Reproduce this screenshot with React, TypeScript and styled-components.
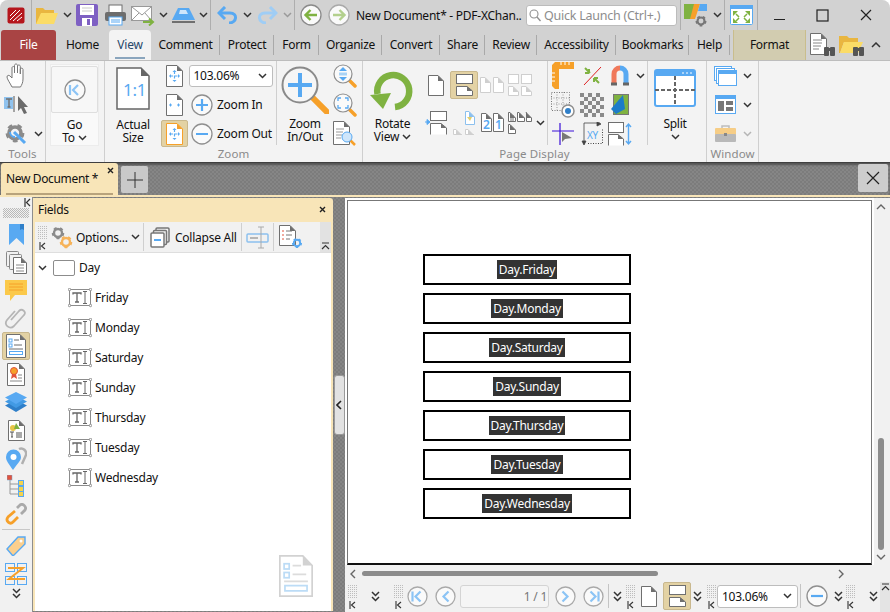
import React from 'react';
import styled, { createGlobalStyle } from 'styled-components';

const Global = createGlobalStyle`
  html, body { margin: 0; padding: 0; background: #fff; }
  body { font-family: 'Noto Sans', 'Open Sans', sans-serif; font-size: 12px; letter-spacing: -0.25px; color: #111; }
`;

const texture = `repeating-conic-gradient(#7c7c7c 0 25%, #868686 0 50%) 0 0 / 4px 4px`;

const Win = styled.div`
  width: 890px;
  height: 612px;
  display: flex;
  flex-direction: column;
  overflow: hidden;
  background: #f1f1f1;
  border-radius: 8px 8px 0 0;
`;

const TitleBar = styled.div`
  height: 30px;
  flex: none;
  display: flex;
  align-items: center;
  background: #d2d2d2;
`;

const Slot = styled.div<{ $w: number }>`
  width: ${p => p.$w}px;
  flex: none;
  display: flex;
  align-items: center;
  justify-content: center;
`;

const VLine = styled.div`
  width: 1px;
  height: 30px;
  flex: none;
  background: #aeaeae;
`;

const DocTitle = styled.div`
  width: 170px;
  margin-left: 5px;
  flex: none;
  white-space: nowrap;
`;

const Search = styled.div`
  width: 151px;
  height: 21px;
  box-sizing: border-box;
  flex: none;
  display: flex;
  align-items: center;
  gap: 3px;
  padding-left: 2px;
  background: #fff;
  border: 1px solid #bcbcbc;
  border-radius: 3px;
  color: #8d8d8d;
  font-size: 12.5px;
`;

const TabStrip = styled.div`
  height: 30px;
  flex: none;
  display: flex;
  align-items: stretch;
  background: #d2d2d2;
  padding-left: 1px;
`;

const FileTab = styled.div`
  width: 55px;
  flex: none;
  box-sizing: border-box;
  padding-bottom: 2px;
  display: flex;
  align-items: center;
  justify-content: center;
  background: #a94444;
  color: #fff;
  border-radius: 3px 3px 0 0;
`;

const Tab = styled.div<{ $w: number; $active?: boolean; $sep?: boolean }>`
  width: ${p => p.$w}px;
  flex: none;
  box-sizing: border-box;
  padding-bottom: 2px;
  position: relative;
  display: flex;
  align-items: center;
  justify-content: center;
  background: ${p => (p.$active ? '#f3f3f3' : 'transparent')};
  border-radius: ${p => (p.$active ? '4px 4px 0 0' : '0')};
  color: ${p => (p.$active ? '#28486a' : '#111')};
  &::after {
    content: '';
    position: absolute;
    right: 0;
    top: 5px;
    bottom: 5px;
    width: 1px;
    background: ${p => (p.$sep ? '#a9a9a9' : 'transparent')};
  }
  &::before {
    content: '';
    position: absolute;
    left: 6px;
    right: 6px;
    bottom: 1px;
    height: 2px;
    background: ${p => (p.$active ? '#8aa5bd' : 'transparent')};
  }
`;

const FormatTab = styled.div`
  width: 73px;
  margin-left: 3px;
  flex: none;
  padding-bottom: 2px;
  display: flex;
  align-items: center;
  justify-content: center;
  background: #d2ccb0;
  border-left: 1px solid #c9bd8c;
  border-right: 1px solid #c9bd8c;
  box-sizing: border-box;
`;

const Ribbon = styled.div`
  height: 103px;
  flex: none;
  box-sizing: border-box;
  display: flex;
  background: #f3f3f3;
  border-top: 1px solid #bdbdbd;
  border-bottom: 1px solid #3f3f3f;
`;

const Group = styled.div<{ $w: number }>`
  width: ${p => p.$w}px;
  flex: none;
  box-sizing: border-box;
  display: flex;
  flex-direction: column;
  border-right: 1px solid #cfcfcf;
`;

const GroupBody = styled.div`
  height: 85px;
  flex: none;
  display: flex;
`;

const GroupLabel = styled.div`
  flex: 1;
  padding-bottom: 2px;
  display: flex;
  align-items: center;
  justify-content: center;
  color: #8a8a8a;
  font-size: 11.5px;
  letter-spacing: 0.1px;
`;

const Cells = styled.div<{ $cols: string; $rows: string }>`
  display: grid;
  grid-template-columns: ${p => p.$cols};
  grid-template-rows: ${p => p.$rows};
  flex: none;
  justify-items: center;
  align-items: center;
`;

const Big = styled.div<{ $w: number; $pad?: number }>`
  width: ${p => p.$w}px;
  flex: none;
  display: flex;
  flex-direction: column;
  align-items: center;
  padding-top: ${p => p.$pad ?? 6}px;
`;

const BigText = styled.div<{ $top: number }>`
  margin-top: ${p => p.$top}px;
  display: flex;
  flex-direction: column;
  align-items: center;
  white-space: nowrap;
`;

const BigLine = styled.div`
  height: 13px;
  line-height: 13px;
  display: flex;
  align-items: center;
  gap: 3px;
`;

const GoCard = styled.div`
  width: 49px;
  height: 82px;
  margin: 3px 0 0 4px;
  box-sizing: border-box;
  padding: 1px 0;
  background: #f9f9f9;
  border: 1px solid #ececec;
  display: flex;
  flex-direction: column;
  align-items: center;
`;

const GoFace = styled.div`
  width: 47px;
  height: 47px;
  flex: none;
  box-sizing: border-box;
  background: #f7f7f7;
  border: 1px solid #dedede;
  border-radius: 2px;
  display: flex;
  align-items: center;
  justify-content: center;
`;

const Toggled = styled.div<{ $w: number; $h: number }>`
  width: ${p => p.$w}px;
  height: ${p => p.$h}px;
  box-sizing: border-box;
  flex: none;
  display: flex;
  align-items: center;
  justify-content: center;
  background: #e3d2a4;
  border: 1px solid #c9b88e;
  border-radius: 2px;
`;

const Combo = styled.div<{ $w: number; $h: number }>`
  width: ${p => p.$w}px;
  height: ${p => p.$h}px;
  box-sizing: border-box;
  flex: none;
  display: flex;
  align-items: center;
  justify-content: space-between;
  padding: 0 5px 0 4px;
  background: #fff;
  border: 1px solid #bdbdbd;
  border-radius: 3px;
`;

const ZoomRow = styled.div`
  display: flex;
  align-items: center;
  gap: 4px;
  justify-self: start;
  margin-left: 4px;
  white-space: nowrap;
`;

const ShortLine = styled.div`
  width: 1px;
  height: 84px;
  flex: none;
  background: #cfcfcf;
`;

const DocTabs = styled.div`
  height: 34px;
  flex: none;
  box-sizing: border-box;
  display: flex;
  background: ${texture};
  box-shadow: inset 0 2px 2px #555;
  border-bottom: 2px solid #f8e5b8;
  padding-left: 1px;
`;

const DocTab = styled.div`
  width: 117px;
  flex: none;
  position: relative;
  box-sizing: border-box;
  padding: 7px 0 0 5px;
  line-height: 17px;
  background: #f8e5b8;
  border-radius: 3px 3px 0 0;
  letter-spacing: -0.35px;
  white-space: nowrap;
  &::after {
    content: '';
    position: absolute;
    left: 5px;
    right: 5px;
    bottom: 0;
    height: 2px;
    background: #b8a37c;
  }
`;

const DocTabClose = styled.div`
  position: absolute;
  top: 4px;
  right: 4px;
`;

const AddTab = styled.div`
  width: 27px;
  height: 27px;
  margin: 3px 0 0 3px;
  flex: none;
  display: flex;
  align-items: center;
  justify-content: center;
  background: #c9c9c9;
  border-radius: 2px;
`;

const CloseDoc = styled.div`
  width: 30px;
  height: 28px;
  margin: 1px 2px 0 auto;
  flex: none;
  display: flex;
  align-items: center;
  justify-content: center;
  background: #cdcdcd;
  border-radius: 2px;
`;

const Main = styled.div`
  flex: 1;
  min-height: 0;
  display: flex;
  background: ${texture};
`;

const Rail = styled.div`
  width: 33px;
  flex: none;
  box-sizing: border-box;
  display: flex;
  flex-direction: column;
  align-items: center;
  background: #f1f1f1;
  border-right: 1px solid #8e8e8e;
`;

const RailTop = styled.div`
  align-self: flex-end;
  height: 11px;
  padding: 1px 1px 0 0;
  box-sizing: border-box;
`;

const Dots = styled.div`
  width: 26px;
  height: 10px;
  margin-bottom: 2px;
  flex: none;
  background: repeating-conic-gradient(#b9b9b9 0 25%, transparent 0 50%) 0 0 / 2px 2px;
`;

const RailItem = styled.div<{ $active?: boolean }>`
  width: 28px;
  height: 28px;
  box-sizing: border-box;
  flex: none;
  display: flex;
  align-items: center;
  justify-content: center;
  background: ${p => (p.$active ? '#e3d2a4' : 'transparent')};
  border: 1px solid ${p => (p.$active ? '#c9b88e' : 'transparent')};
  border-radius: 2px;
`;

const RailRule = styled.div`
  width: 28px;
  height: 1px;
  margin: 1px 0 2px;
  flex: none;
  background: #c8c8c8;
`;

const Panel = styled.div`
  width: 300px;
  flex: none;
  margin: 1px 0;
  position: relative;
  box-sizing: border-box;
  display: flex;
  flex-direction: column;
  background: #f8e5b8;
  border-radius: 0 3px 0 0;
  padding: 0 2px;
`;

const PanelHead = styled.div`
  height: 24px;
  flex: none;
  padding-bottom: 1px;
  box-sizing: border-box;
  display: flex;
  align-items: center;
  justify-content: space-between;
  padding-left: 3px;
  padding-right: 5px;
`;

const PanelBar = styled.div`
  height: 31px;
  flex: none;
  box-sizing: border-box;
  display: flex;
  align-items: center;
  padding-left: 2px;
  background: #f1f1f1;
  border-bottom: 1px solid #dedede;
`;

const BarEnd = styled.div`
  width: 11px;
  height: 100%;
  margin-left: auto;
  flex: none;
  display: flex;
  align-items: flex-end;
  justify-content: center;
  padding-bottom: 2px;
  box-sizing: border-box;
  background: #e2e2e2;
`;

const BarLine = styled.div`
  width: 1px;
  height: 28px;
  flex: none;
  background: #cfcfcf;
`;

const BarText = styled.div<{ $w: number }>`
  width: ${p => p.$w}px;
  flex: none;
  white-space: nowrap;
`;

const Tree = styled.div`
  flex: 1;
  background: #fff;
`;

const TreeRow = styled.div<{ $child?: boolean }>`
  height: 30px;
  box-sizing: border-box;
  padding-bottom: 1px;
  display: flex;
  align-items: center;
  gap: 3px;
  padding-left: ${p => (p.$child ? 33 : 3)}px;
`;

const RootBox = styled.div`
  width: 22px;
  height: 16px;
  margin: 0 1px 0 3px;
  box-sizing: border-box;
  background: #fff;
  border: 1px solid #8c8c8c;
  border-radius: 2px;
`;

const Watermark = styled.div`
  position: absolute;
  right: 20px;
  bottom: 14px;
`;

const Splitter = styled.div`
  width: 12px;
  flex: none;
  display: flex;
  align-items: center;
  justify-content: center;
`;

const SplitGrip = styled.div`
  width: 9px;
  height: 58px;
  flex: none;
  display: flex;
  align-items: center;
  justify-content: center;
  background: #e2e2e2;
  border: 1px solid #9a9a9a;
  border-radius: 3px;
`;

const Viewer = styled.div`
  flex: 1;
  min-width: 0;
  display: flex;
  flex-direction: column;
  padding-top: 1px;
`;

const ViewRow = styled.div`
  height: 367px;
  flex: none;
  display: flex;
`;

const Sheet = styled.div`
  width: 529px;
  flex: none;
  box-sizing: border-box;
  border: 2px solid #fff;
  border-bottom: 0;
  background: #fff;
`;

const SheetInner = styled.div`
  height: 100%;
  box-sizing: border-box;
  padding: 53px 0 0 75px;
  display: flex;
  flex-direction: column;
  gap: 8px;
  background: #fff;
  border: 1px solid #777;
  border-bottom: 2px solid #111;
`;

const FieldBox = styled.div`
  width: 208px;
  height: 31px;
  flex: none;
  box-sizing: border-box;
  display: flex;
  align-items: center;
  justify-content: center;
  background: #fff;
  border: 2px solid #000;
`;

const FieldName = styled.span`
  padding: 0 2px;
  line-height: 19px;
  background: #333;
  color: #fff;
`;

const VScroll = styled.div`
  flex: 1;
  display: flex;
  flex-direction: column;
  align-items: center;
  padding: 6px 2px 5px 0;
  box-sizing: border-box;
  background: #f1f1f1;
`;

const VThumb = styled.div`
  width: 6px;
  height: 112px;
  margin-top: auto;
  margin-bottom: 4px;
  flex: none;
  background: #8c8c8c;
  border-radius: 3px;
`;

const HScroll = styled.div`
  height: 17px;
  flex: none;
  display: flex;
  align-items: center;
  padding-left: 5px;
  background: #f1f1f1;
`;

const HThumb = styled.div`
  width: 296px;
  height: 5px;
  margin: 0 180px 0 6px;
  flex: none;
  background: #8c8c8c;
  border-radius: 3px;
`;

const Status = styled.div`
  flex: 1;
  display: flex;
  align-items: center;
  padding: 0 0 2px 2px;
  background: #f1f1f1;
  border-radius: 0 0 8px 0;
`;

const StatusEnd = styled.div`
  width: 10px;
  flex: none;
  align-self: stretch;
  margin-bottom: -2px;
  padding-top: 1px;
  box-sizing: border-box;
  display: flex;
  justify-content: center;
  background: #e4e4e4;
`;

const PageInput = styled.div`
  width: 89px;
  height: 23px;
  margin-left: 1px;
  flex: none;
  box-sizing: border-box;
  display: flex;
  align-items: center;
  justify-content: flex-end;
  gap: 2px;
  padding-right: 1px;
  background: #f5f5f5;
  border: 1px solid #d4d4d4;
  border-radius: 3px;
  color: #777;
`;

const StatusLine = styled.div`
  width: 1px;
  height: 24px;
  flex: none;
  background: #c4c4c4;
`;

const Glyph = styled.svg`
  display: block;
  flex: none;
`;

type IconProps = { w: number; h: number; children?: React.ReactNode };
const Ico = ({ w, h, children }: IconProps) => (
  <Glyph width={w} height={h} viewBox={`0 0 ${w} ${h}`} fill="none">
    {children}
  </Glyph>
);

const BLUE = '#58a9f2';
const ORANGE = '#f6a029';
const GRAY = '#6f6f6f';
const GREEN = '#7fb241';
const FONT = "'Noto Sans', sans-serif";

const Chev = ({ c = '#333' }: { c?: string }) => (
  <Ico w={9} h={6}>
    <path d="M1 1l3.5 3.5L8 1" stroke={c} strokeWidth="1.5" />
  </Ico>
);

const DblChev = () => (
  <Ico w={9} h={11}>
    <path d="M1 1l3.5 3.5L8 1M1 6l3.5 3.5L8 6" stroke="#333" strokeWidth="1.5" />
  </Ico>
);

const Collapse = () => (
  <Ico w={7} h={9}>
    <path d="M1 0v9M6 1L2.5 4.5 6 8" stroke="#333" strokeWidth="1.2" />
  </Ico>
);

const GripMark = () => (
  <Ico w={10} h={28}>
    {[1, 3, 5, 7, 9].map(x =>
      [3, 5, 7, 9, 11, 13, 15].map(y => <rect key={`${x}-${y}`} x={x} y={y} width="1" height="1" fill="#bdbdbd" />),
    )}
    <path d="M3 19v8M8 20l-3.5 3 3.5 3" stroke="#333" strokeWidth="1.1" />
  </Ico>
);

const Cross = ({ s = 8, c = '#222', sw = 1.5 }: { s?: number; c?: string; sw?: number }) => (
  <Ico w={s} h={s}>
    <path d={`M1 1L${s - 1} ${s - 1}M${s - 1} 1L1 ${s - 1}`} stroke={c} strokeWidth={sw} />
  </Ico>
);

const Sh = ({ x = 0, y = 0, w, h, c = GRAY, f = '#fff' }: { x?: number; y?: number; w: number; h: number; c?: string; f?: string }) => (
  <>
    <path d={`M${x + 0.5} ${y + 0.5}H${x + w - 6}L${x + w - 0.5} ${y + 6}V${y + h - 0.5}H${x + 0.5}Z`} fill={f} stroke={c} />
    <path d={`M${x + w - 6} ${y + 0.5}L${x + w - 0.5} ${y + 6}H${x + w - 6}Z`} fill={c} />
  </>
);

const Gear = ({ cx, cy, r, c }: { cx: number; cy: number; r: number; c: string }) => (
  <>
    <circle cx={cx} cy={cy} r={r} stroke={c} strokeWidth={r * 0.6} />
    <circle cx={cx} cy={cy} r={r * 1.32} stroke={c} strokeWidth={r * 0.5} strokeDasharray={`${r * 0.75} ${r * 0.9}`} />
  </>
);

const Round = ({ s, c = '#8f8f8f', children }: { s: number; c?: string; children?: React.ReactNode }) => (
  <Ico w={s} h={s}>
    <circle cx={s / 2} cy={s / 2} r={s / 2 - 1} fill="#fafafa" stroke={c} strokeWidth="1.3" />
    {children}
  </Ico>
);

const AppLogo = () => (
  <Ico w={18} h={17}>
    <rect x="0.5" y="0.5" width="17" height="16" rx="2" fill="#b5161c" />
    <path d="M3 13L13 3M6 14l9-8M3 9l6-6M10 14l5-4" stroke="#fff" strokeWidth="1" />
  </Ico>
);

const Folder = () => (
  <Ico w={24} h={19}>
    <path d="M1 18V2h7l2 2h9v4H6L2 18z" fill="#e9b640" />
    <path d="M1 18L6 7h17l-4 11z" fill="#fbdc67" />
  </Ico>
);

const Save = () => (
  <Ico w={22} h={22}>
    <rect width="22" height="22" rx="2" fill="#7e60c3" />
    <rect x="4" y="1" width="14" height="10" fill="#fff" />
    <path d="M6 4h10M6 7h10" stroke="#c9c9c9" />
    <rect x="6" y="14" width="10" height="8" fill="#fff" />
    <rect x="11" y="15" width="3" height="6" fill="#7e60c3" />
  </Ico>
);

const Printer = () => (
  <Ico w={23} h={22}>
    <rect x="5" y="1" width="13" height="8" fill="#fff" stroke={GRAY} />
    <rect x="1" y="8" width="21" height="9" rx="2" fill="#6d6d6d" />
    <rect x="5" y="13" width="13" height="8" fill="#fff" stroke={BLUE} />
    <path d="M7 16h9M7 18h9" stroke={BLUE} />
  </Ico>
);

const Mail = () => (
  <Ico w={24} h={21}>
    <rect x="0.5" y="1.5" width="20" height="14" fill="#fff" stroke="#999" />
    <path d="M1 2l10 8 9-8M1 15l7-7M20 15l-6-7" stroke="#999" />
    <path d="M12 17h9M18 13.5l4 3.5-4 3.5" stroke={GREEN} strokeWidth="2" />
  </Ico>
);

const Stamp = () => (
  <Ico w={25} h={17}>
    <path d="M7 1h11l6 12H1z" fill={BLUE} />
    <path d="M9 3h6l2 4H8z" fill="#cfe6fb" />
    <rect x="1" y="14" width="23" height="2" fill="#6f6f6f" />
  </Ico>
);

const Undo = ({ c, flip }: { c: string; flip?: boolean }) => (
  <Ico w={21} h={18}>
    <g transform={flip ? 'translate(21 0) scale(-1 1)' : undefined}>
      <path d="M3 7h10c8 0 7 10-1 10" stroke={c} strokeWidth="3" />
      <path d="M8 1L2 7l6 6" stroke={c} strokeWidth="3" />
    </g>
  </Ico>
);

const NavArrow = ({ c, ring, flip }: { c: string; ring: string; flip?: boolean }) => (
  <Round s={22} c={ring}>
    <g transform={flip ? 'translate(22 0) scale(-1 1)' : undefined}>
      <path d="M17 11H6M10.5 6L5.5 11l5 5" stroke={c} strokeWidth="2.4" />
    </g>
  </Round>
);

const SearchGlass = () => (
  <Ico w={12} h={13}>
    <circle cx="5" cy="5" r="4" stroke="#8f8f8f" strokeWidth="1.1" />
    <path d="M8 8l3.5 4" stroke="#8f8f8f" strokeWidth="1.3" />
  </Ico>
);

const ColorTool = () => (
  <Ico w={24} h={25}>
    <rect x="0" y="1" width="10" height="15" fill={GREEN} />
    <path d="M10 1h6l-5 15H6z" fill={ORANGE} />
    <path d="M16 1h7v7h-9z" fill={BLUE} />
    <Gear cx={17} cy={18} r={3.5} c="#777" />
  </Ico>
);

const Fullscreen = () => (
  <Ico w={23} h={20}>
    <rect x="0.5" y="0.5" width="22" height="19" rx="1" fill="#fff" stroke={BLUE} />
    <rect x="0" y="0" width="23" height="4" fill={BLUE} />
    <path d="M3 6h5L3 11zM20 6h-5l5 5zM3 18h5l-5-5zM20 18h-5l5-5z" fill={GREEN} />
    <path d="M6 9l3 3M17 9l-3 3M6 16l3-3M17 16l-3-3" stroke={GREEN} strokeWidth="1.5" />
  </Ico>
);

const Hand = () => (
  <Ico w={20} h={25}>
    <path d="M6 24C4 20 1 16 1 14c0-2 2-2 3-1l2 2V5c0-2 2.5-2 2.5 0v5V2.5c0-2 3-2 3 0V10V3.5c0-2 2.8-2 2.8 0V11V6.5c0-1.8 2.7-1.8 2.7 0V16c0 4-1.5 6-2.5 8z" fill="#fff" stroke="#777" />
  </Ico>
);

const TextSelect = () => (
  <Ico w={25} h={20}>
    <rect x="0" y="2" width="9" height="12" fill="#8fc2ee" />
    <path d="M2 4h6M5 4v8M3.5 12h3" stroke={GRAY} strokeWidth="1.4" />
    <path d="M10 1v16" stroke="#555" />
    <path d="M14 1v15l3-3 3 6 3-1-3-6h4z" fill="#6a6a6a" />
  </Ico>
);

const GearWrench = () => (
  <Ico w={22} h={22}>
    <Gear cx={10} cy={10} r={6} c="#8b8b8b" />
    <path d="M9 9l11 11" stroke={BLUE} strokeWidth="3" />
    <path d="M5 9a5 5 0 0 0 5 5" stroke={BLUE} strokeWidth="2" />
  </Ico>
);

// first/prev/next/last page buttons share the same ring and chevrons
const PageBtn = ({ s = 21, kind, c = '#a9a9a9' }: { s?: number; kind: 'first' | 'prev' | 'next' | 'last'; c?: string }) => {
  const m = s / 2;
  const left = `M${m + 3} ${m - 5}L${m - 2} ${m}l5 5`;
  const right = `M${m - 3} ${m - 5}L${m + 2} ${m}l-5 5`;
  const d = {
    first: `${left}M${m - 5} ${m - 5}v10`,
    prev: left,
    next: right,
    last: `${right}M${m + 5} ${m - 5}v10`,
  }[kind];
  return (
    <Round s={s} c={c}>
      <path d={d} stroke="#8cc4f5" strokeWidth="2.2" />
    </Round>
  );
};

const ActualSize = () => (
  <Ico w={34} h={43}>
    <path d="M1 1H25L33 9V42H1Z" fill="#fff" stroke="#666" strokeWidth="1.5" />
    <path d="M25 1L33 9H25Z" fill="#666" />
    <text x="7" y="29" fontSize="17" fill={BLUE} fontFamily={FONT}>1:1</text>
  </Ico>
);

const FitDoc = ({ kind, edge = GRAY }: { kind: 'all' | 'width'; edge?: string }) => (
  <Ico w={17} h={22}>
    <Sh w={17} h={22} c={edge} />
    {kind === 'all' && <path d="M8.5 6v10M4 11h9" stroke={BLUE} strokeDasharray="3 1.5" strokeWidth="1.2" />}
    <path d="M3 11l2-2v4zM14 11l-2-2v4z" fill={BLUE} />
    {kind === 'all' && <path d="M8.5 5l-2 2h4zM8.5 17l-2-2h4z" fill={BLUE} />}
    {kind === 'width' && <path d="M5 11h1M11 11h1" stroke={BLUE} />}
  </Ico>
);

const PlusCircle = ({ s = 22, minus }: { s?: number; minus?: boolean }) => (
  <Round s={s}>
    <path d={minus ? `M5 ${s / 2}H${s - 5}` : `M5 ${s / 2}H${s - 5}M${s / 2} 5V${s - 5}`} stroke={BLUE} strokeWidth="2.2" />
  </Round>
);

const BigMagnifier = () => (
  <Ico w={48} h={48}>
    <path d="M31 31l15 15" stroke={ORANGE} strokeWidth="6" strokeLinecap="round" />
    <circle cx="19" cy="19" r="17.5" fill="#f6f6f6" stroke="#8a8a8a" strokeWidth="2" />
    <path d="M7 19H31M19 7V31" stroke={BLUE} strokeWidth="4" />
  </Ico>
);

const SmallMagnifier = ({ children }: { children: React.ReactNode }) => (
  <Ico w={24} h={24}>
    <path d="M15 15l7 7" stroke={ORANGE} strokeWidth="3.5" strokeLinecap="round" />
    <circle cx="10" cy="10" r="9" fill="#fafafa" stroke="#8f8f8f" strokeWidth="1.2" />
    {children}
  </Ico>
);

const FindDoc = () => (
  <Ico w={24} h={26}>
    <Sh w={17} h={24} />
    <path d="M3 8h8M3 11h7M3 14h6M3 17h5" stroke="#999" />
    <path d="M17 19l5 5" stroke={ORANGE} strokeWidth="2.5" />
    <circle cx="14" cy="16" r="5" fill="#cfe6fb" stroke={BLUE} />
  </Ico>
);

const Rotate = () => (
  <Ico w={46} h={44}>
    <path d="M7.500 24A16 16 0 1 1 25 37" stroke={GREEN} strokeWidth="6.500" />
    <path d="M0 25l21-2-8 16z" fill={GREEN} />
  </Ico>
);

const SinglePage = () => (
  <Ico w={16} h={21}>
    <Sh w={16} h={21} />
  </Ico>
);

const SplitDoc = ({ c = GRAY }: { c?: string }) => (
  <Ico w={17} h={22}>
    <rect x="0.5" y="0.5" width="16" height="9" fill="#fff" stroke={c} />
    <path d="M0.5 21.5V12.5H11L16.5 17V21.5H0.5Z" fill="#fff" stroke={c} />
    <path d="M11 12.5l5.5 4.5H11z" fill={c} />
  </Ico>
);

const FaintPair = () => (
  <Ico w={24} h={18}>
    <Sh x={0} y={1} w={11} h={16} c="#cfcfcf" />
    <Sh x={13} y={1} w={11} h={16} c="#cfcfcf" />
  </Ico>
);

const FaintGrid = () => (
  <Ico w={25} h={22}>
    <rect x="0.5" y="0.5" width="10" height="9" fill="#fff" stroke="#cfcfcf" />
    <rect x="13.5" y="0.5" width="10" height="9" fill="#fff" stroke="#cfcfcf" />
    <Sh x={0} y={12} w={11} h={10} c="#cfcfcf" />
    <Sh x={13} y={12} w={11} h={10} c="#cfcfcf" />
  </Ico>
);

const ScrollDoc = () => (
  <Ico w={22} h={24}>
    <rect x="5.5" y="0.5" width="16" height="9" fill="#fff" stroke={GRAY} />
    <path d="M5.5 23.5V12.5H16L21.5 17V23.5" fill="#fff" stroke={GRAY} />
    <path d="M16 12.5l5.5 4.5H16z" fill={GRAY} />
    <path d="M0 11h3M2 8.5L5 11 2 13.5z" stroke={BLUE} fill={BLUE} />
  </Ico>
);

const CoverDoc = () => (
  <Ico w={22} h={24}>
    <Sh x={12} y={0} w={10} h={14} c="#8cc0ee" />
    <path d="M14 6h5l-2 4z" fill="#e3cf6a" />
    <Sh x={0} y={18} w={9} h={6} c="#cfcfcf" />
    <Sh x={12} y={18} w={9} h={6} c="#cfcfcf" />
  </Ico>
);

const NumDocs = () => (
  <Ico w={23} h={19}>
    <Sh x={0} y={0} w={11} h={19} />
    <text x="2" y="16" fontSize="12" fontWeight="600" fill={BLUE} fontFamily={FONT}>2</text>
    <Sh x={12} y={0} w={11} h={19} />
    <text x="14" y="16" fontSize="12" fontWeight="600" fill={BLUE} fontFamily={FONT}>1</text>
  </Ico>
);

const MiniDocs = () => (
  <Ico w={24} h={22}>
    <Sh x={0} y={0} w={8} h={10} />
    <path d="M2 4h4M2 6h4M2 8h4" stroke="#777" />
    <Sh x={9} y={0} w={8} h={10} />
    <Sh x={18} y={0} w={6} h={10} />
    <Sh x={0} y={12} w={8} h={10} />
  </Ico>
);

const Ruler = () => (
  <Ico w={22} h={27}>
    <path d="M0 3l3-3h19v7H7v20H3l-3-3z" fill={ORANGE} />
    <path d="M9 0v3M13 0v3M17 0v3M0 11h3M0 15h3M0 19h3" stroke="#fff" />
  </Ico>
);

const MeasureLine = () => (
  <Ico w={20} h={20}>
    <path d="M2 19L19 1" stroke="#e02020" />
    <path d="M3 2l5 5M7 7V3M7 7H3M17 17l-5-5M12 12v4M12 12h4" stroke={GREEN} strokeWidth="2" />
  </Ico>
);

const Magnet = () => (
  <Ico w={18} h={22}>
    <path d="M3 20V9a6 6 0 0 1 6-6" stroke="#f0785a" strokeWidth="5" />
    <path d="M15 20V9a6 6 0 0 0-6-6" stroke={BLUE} strokeWidth="5" />
    <path d="M0 19h6M12 19h6" stroke="#666" strokeWidth="3" />
  </Ico>
);

const Snap = () => (
  <Ico w={24} h={26}>
    <rect x="0.5" y="0.5" width="18" height="18" stroke="#777" strokeDasharray="1 1.5" />
    <path d="M6 0v19M12 0v19M0 6h19M0 12h19" stroke="#999" strokeDasharray="1 1.5" />
    <circle cx="17" cy="19" r="6" fill="#fff" stroke="#8f8f8f" strokeWidth="1.5" />
    <circle cx="17" cy="19" r="3" fill="#2f7fc9" />
  </Ico>
);

const Checker = () => (
  <Ico w={24} h={24}>
    {Array.from({ length: 36 }).map((_, i) => (
      <rect key={i} x={(i % 6) * 4} y={Math.floor(i / 6) * 4} width="4" height="4" fill={(i + Math.floor(i / 6)) % 2 ? '#f3f3f3' : '#8a8a8a'} />
    ))}
  </Ico>
);

const Swatch = () => (
  <Ico w={18} h={22}>
    <rect x="2.5" y="0.5" width="15" height="20" fill={GREEN} stroke="#777" />
    <path d="M0 15L12 1l2 14-9 5z" fill="#1c7cc9" />
  </Ico>
);

const CrossCursor = () => (
  <Ico w={22} h={22}>
    <path d="M8 0v22M0 8h22" stroke="#3a10d8" strokeWidth="1.2" />
    <path d="M10 9v10l3-3 7-1z" fill="#777" />
  </Ico>
);

const XY = () => (
  <Ico w={22} h={24}>
    <path d="M3 1h16M16 0l4 2-4 2zM3 1v21M1 19l2 4 2-4z" fill="#444" stroke="#444" strokeWidth="0.8" />
    <path d="M7 21.5h14.5V6" stroke="#444" strokeDasharray="1 1.5" />
    <text x="6" y="17" fontSize="10" fill={BLUE} fontFamily={FONT}>XY</text>
  </Ico>
);

const PageHeight = () => (
  <Ico w={24} h={24}>
    <rect x="0.5" y="0.5" width="15" height="10" fill="#fff" stroke={GRAY} />
    <path d="M0.5 23.5V12.5H10L15.5 17V23.5" fill="#fff" stroke={GRAY} />
    <path d="M10 12.5l5.5 4.5H10z" fill={GRAY} />
    <path d="M20.5 2v20M18 5l2.5-3 2.5 3M18 19l2.5 3 2.5-3" stroke={BLUE} strokeWidth="1.4" />
  </Ico>
);

const SplitWin = () => (
  <Ico w={42} h={38}>
    <rect x="1" y="1" width="40" height="36" rx="2" fill="#fff" stroke={BLUE} strokeWidth="2" />
    <rect x="1" y="1" width="40" height="6" fill={BLUE} />
    <path d="M28 4h2M32 4h2M36 4h2" stroke="#fff" />
    <path d="M21 7v30M1 21h40" stroke="#666" strokeWidth="2" strokeDasharray="4 2" />
  </Ico>
);

const Cascade = () => (
  <Ico w={23} h={20}>
    <rect x="0.5" y="0.5" width="17" height="14" fill="#fff" stroke={BLUE} />
    <rect x="2.5" y="2.5" width="18" height="15" fill="#fff" stroke={BLUE} />
    <rect x="4.5" y="4.5" width="18" height="15" fill="#fff" stroke={BLUE} />
    <rect x="4" y="4" width="19" height="4" fill={BLUE} />
  </Ico>
);

const Tiled = () => (
  <Ico w={21} h={19}>
    <rect x="0.5" y="0.5" width="20" height="18" fill="#fff" stroke={BLUE} />
    <rect x="0" y="0" width="21" height="4" fill={BLUE} />
    <rect x="3" y="6" width="6" height="10" fill="#777" />
    <rect x="11" y="6" width="7" height="4" fill="#777" />
    <rect x="11" y="12" width="7" height="4" fill="#777" />
  </Ico>
);

const Toolbox = () => (
  <Ico w={21} h={19}>
    <path d="M7 5V2h7v3" stroke="#bdbdbd" strokeWidth="1.5" />
    <rect x="0" y="4" width="21" height="7" rx="1" fill="#f6cd86" />
    <rect x="0" y="10" width="21" height="8" rx="1" fill="#b9b9b9" />
    <rect x="9" y="9" width="3" height="3" fill="#888" />
  </Ico>
);

const FindBinoc = ({ folder }: { folder?: boolean }) => (
  <Ico w={26} h={24}>
    {folder ? (
      <>
        <path d="M0 20V3h8l2 2h9v4H5L1 20z" fill="#e9b640" />
        <path d="M1 20L5 9h19l-5 11z" fill="#fbdc67" />
      </>
    ) : (
      <>
        <Sh w={17} h={22} />
        <path d="M3 7h9M3 10h9M3 13h8M3 16h6" stroke="#888" />
      </>
    )}
    <rect x="14" y="14" width="5" height="9" rx="1" fill="#555" />
    <rect x="20" y="14" width="5" height="9" rx="1" fill="#555" />
    <rect x="17" y="15" width="5" height="3" fill="#555" />
  </Ico>
);

const Bookmark = () => (
  <Ico w={15} h={21}>
    <path d="M0 0h15v21l-7.5-7L0 21z" fill={BLUE} />
    <path d="M11 0h4v6l-2-1-2 1z" fill="#2f7fc9" />
  </Ico>
);

const PagesIcon = () => (
  <Ico w={21} h={23}>
    <rect x="0.5" y="0.5" width="12" height="15" rx="1" stroke="#888" />
    <rect x="3.5" y="3.5" width="12" height="15" rx="1" fill="#f1f1f1" stroke="#888" />
    <Sh x={7} y={6} w={14} h={17} />
    <path d="M10 14h8M10 17h8M10 20h8" stroke="#888" />
  </Ico>
);

const CommentIcon = () => (
  <Ico w={22} h={21}>
    <path d="M0 0h22v15H10l-5 6v-6H0z" fill="#fbc94a" />
    <path d="M4 4h14M4 7h14M4 10h14" stroke={ORANGE} />
  </Ico>
);

const ClipIcon = () => (
  <Ico w={24} h={22}>
    <path d="M7 13l8-9c3-3 8 1 5 4L10 19c-4 4-11-1-7-6l8-9" stroke="#b5b5b5" strokeWidth="1.8" />
  </Ico>
);

const FormDoc = ({ faint }: { faint?: boolean }) => {
  const line = faint ? '#dcdcdc' : '#6d6d6d';
  const accent = faint ? '#bcdcf6' : BLUE;
  const edge = faint ? '#d2d2d2' : GRAY;
  return (
    <Ico w={faint ? 34 : 20} h={faint ? 42 : 24}>
      <g transform={faint ? 'scale(1.7 1.75)' : undefined}>
        <Sh w={20} h={24} c={edge} />
        <rect x="3" y="5" width="3" height="3" stroke={accent} />
        <rect x="3" y="10" width="3" height="3" stroke={accent} />
        <path d="M8 6h5M8 11h8M3 15h14" stroke={line} />
        <rect x="3.5" y="17.5" width="13" height="3" stroke={accent} />
      </g>
    </Ico>
  );
};

const CertDoc = () => (
  <Ico w={18} h={23}>
    <Sh w={18} h={23} />
    <circle cx="7" cy="8" r="3.5" fill={ORANGE} stroke="#e0533d" />
    <path d="M5 11l-1 5 3-2 3 2-1-5" fill="#e0533d" />
    <path d="M11 12h4M11 15h4M3 18h12" stroke="#888" />
  </Ico>
);

const Layers = () => (
  <Ico w={22} h={20}>
    <path d="M11 8L22 13.5 11 20 0 13.5z" fill="#2f7fc9" />
    <path d="M11 4L22 9.5 11 16 0 9.5z" fill="#429ae4" />
    <path d="M11 0L22 5.5 11 12 0 5.5z" fill={BLUE} />
  </Ico>
);

const ContentDoc = () => (
  <Ico w={17} h={21}>
    <Sh w={17} h={21} />
    <circle cx="5" cy="8" r="3" fill="#e8c547" />
    <path d="M8 3l4 6H6z" fill={GREEN} />
    <path d="M2 12h4M4 12v5M3 17h2M8 13h6M8 15h6M8 17h6" stroke="#555" />
  </Ico>
);

const Pin = () => (
  <Ico w={21} h={23}>
    <path d="M13 2c4-2 8 2 7 6l-4 9" stroke="#b0b0b0" strokeWidth="2.5" />
    <path d="M7 23C3 17 0 14 0 10a7.5 7.5 0 0 1 15 0c0 4-4 7-8 13z" fill={BLUE} />
    <circle cx="7.5" cy="10" r="3" fill="#fff" />
  </Ico>
);

const TreeIcon = () => (
  <Ico w={18} h={22}>
    <path d="M3 4v15h8M3 9h8M3 14h8" stroke="#999" />
    <rect x="0" y="0" width="5" height="5" fill="#e0533d" stroke="#7aa7d3" strokeWidth="0.5" />
    {[8, 14, 19].map(y => <rect key={y} x="11.5" y={y - 2.5} width="5" height="5" fill="#f6d34c" stroke={BLUE} />)}
  </Ico>
);

const LinkIcon = () => (
  <Ico w={22} h={22}>
    <path d="M12 5l3-3c3-2 7 2 5 5l-4 4" stroke="#a9a9a9" strokeWidth="2.8" />
    <path d="M10 8l-7 6c-3 4 2 8 5 5l5-5" stroke={ORANGE} strokeWidth="2.8" />
  </Ico>
);

const TagIcon = () => (
  <Ico w={20} h={20}>
    <path d="M1 13L12 1h7v7L7 20z" fill="#fbcf8d" stroke={BLUE} strokeWidth="1.4" />
    <circle cx="15" cy="5" r="1.5" fill="#fff" />
  </Ico>
);

const ZIcon = () => (
  <Ico w={22} h={22}>
    <rect x="0.5" y="0.5" width="9" height="8" stroke={BLUE} />
    <rect x="12.5" y="0.5" width="9" height="8" stroke={BLUE} />
    <rect x="0.5" y="13.5" width="9" height="8" stroke={BLUE} />
    <rect x="12.5" y="13.5" width="9" height="8" stroke={BLUE} />
    <path d="M3 5h15L4 16h16" stroke={ORANGE} strokeWidth="2" />
  </Ico>
);

const OptionsGears = () => (
  <Ico w={23} h={25}>
    <Gear cx={8} cy={8} r={4} c="#8b8b8b" />
    <Gear cx={16} cy={17} r={4} c="#f6b35a" />
  </Ico>
);

const CollapseIcon = () => (
  <Ico w={20} h={21}>
    <rect x="6" y="1" width="13" height="14" rx="1" stroke="#777" strokeWidth="1.5" />
    <rect x="3.5" y="3.5" width="13" height="14" rx="1" fill="#f1f1f1" stroke="#777" strokeWidth="1.5" />
    <rect x="1" y="6" width="13" height="14" rx="1" fill="#fff" stroke="#777" strokeWidth="1.5" />
    <rect x="4" y="12" width="7" height="2" fill={BLUE} />
  </Ico>
);

const RenameIcon = () => (
  <Ico w={23} h={23}>
    <rect x="1" y="8" width="21" height="8" rx="1" stroke="#8cc0ee" strokeWidth="1.5" />
    <rect x="4" y="11" width="8" height="2" fill="#b5b5b5" />
    <path d="M15 1v21M12 1h6M12 22h6" stroke="#a9a9a9" />
  </Ico>
);

const ListGear = () => (
  <Ico w={24} h={24}>
    <Sh w={17} h={21} />
    <path d="M3 6h2M3 10h2M3 14h2" stroke="#e0533d" />
    <path d="M7 6h6M7 10h6M7 14h4" stroke="#777" />
    <Gear cx={18} cy={18} r={3.2} c={BLUE} />
  </Ico>
);

const TextField = () => (
  <Ico w={24} h={20}>
    <rect x="1.5" y="1.5" width="21" height="16" stroke="#8c8c8c" />
    {[[1.5, 1.5], [22.5, 1.5], [1.5, 17.5], [22.5, 17.5]].map(([x, y]) => (
      <circle key={`${x}-${y}`} cx={x} cy={y} r="1.2" fill="#fff" stroke="#8c8c8c" />
    ))}
    <path d="M5 6.5V5h8v1.5M9 5v9M7 14h4" stroke="#666" strokeWidth="1.3" />
    <path d="M17 3.5v12M15 3.5h4M15 15.5h4" stroke="#666" />
  </Ico>
);

const UpEnd = () => (
  <Ico w={9} h={8}>
    <path d="M1 1h7M1 7l3.5-3.5L8 7" stroke="#333" strokeWidth="1.2" />
  </Ico>
);

const Arrow = ({ dir }: { dir: 'up' | 'down' | 'left' | 'right' }) => {
  const d = { up: 'M1 5l4-4 4 4', down: 'M1 1l4 4 4-4', left: 'M5 1L1 5l4 4', right: 'M1 1l4 4-4 4' }[dir];
  const flat = dir === 'up' || dir === 'down';
  return (
    <Ico w={flat ? 10 : 6} h={flat ? 6 : 10}>
      <path d={d} stroke="#666" strokeWidth="1.4" />
    </Ico>
  );
};

const FIELDS = ['Friday', 'Monday', 'Saturday', 'Sunday', 'Thursday', 'Tuesday', 'Wednesday'];

const TABS: [string, number][] = [
  ['Comment', 69],
  ['Protect', 54],
  ['Form', 45],
  ['Organize', 63],
  ['Convert', 58],
  ['Share', 45],
  ['Review', 52],
  ['Accessibility', 79],
  ['Bookmarks', 73],
  ['Help', 41],
];

const RAIL_TOP = [<Bookmark />, <PagesIcon />, <CommentIcon />, <ClipIcon />];
const RAIL_MID = [<CertDoc />, <Layers />, <ContentDoc />, <Pin />, <TreeIcon />, <LinkIcon />];

export default function App() {
  return (
    <Win>
      <Global />
      <TitleBar>
        <Slot $w={31}><AppLogo /></Slot>
        <VLine />
        <Slot $w={30}><Folder /></Slot>
        <Slot $w={10}><Chev /></Slot>
        <Slot $w={30}><Save /></Slot>
        <Slot $w={26}><Printer /></Slot>
        <Slot $w={30}><Mail /></Slot>
        <Slot $w={10}><Chev /></Slot>
        <Slot $w={30}><Stamp /></Slot>
        <Slot $w={10}><Chev /></Slot>
        <Slot $w={2} />
        <VLine />
        <Slot $w={32}><Undo c={BLUE} /></Slot>
        <Slot $w={8}><Chev /></Slot>
        <Slot $w={32}><Undo c="#9fcdf5" flip /></Slot>
        <Slot $w={8}><Chev c="#9a9a9a" /></Slot>
        <Slot $w={3} />
        <VLine />
        <Slot $w={32}><NavArrow c={GREEN} ring="#8a8a8a" /></Slot>
        <Slot $w={24}><NavArrow c="#b3d08d" ring="#a9a9a9" flip /></Slot>
        <DocTitle>New Document* - PDF-XChan..</DocTitle>
        <Search><SearchGlass />Quick Launch (Ctrl+.)</Search>
        <Slot $w={3} />
        <VLine />
        <Slot $w={30}><ColorTool /></Slot>
        <Slot $w={12}><Chev /></Slot>
        <Slot $w={1} />
        <VLine />
        <Slot $w={32}><Fullscreen /></Slot>
        <VLine />
        <Slot $w={42}>
          <Ico w={13} h={12}><path d="M1 10.5h11" stroke="#222" strokeWidth="1.2" /></Ico>
        </Slot>
        <Slot $w={44}>
          <Ico w={13} h={13}><rect x="1" y="1" width="11" height="11" stroke="#222" strokeWidth="1.2" /></Ico>
        </Slot>
        <Slot $w={44}><Cross s={12} sw={1.2} /></Slot>
      </TitleBar>

      <TabStrip>
        <FileTab>File</FileTab>
        <Tab $w={53}>Home</Tab>
        <Tab $w={42} $active>View</Tab>
        {TABS.map(([name, w]) => (
          <Tab key={name} $w={w} $sep>{name}</Tab>
        ))}
        <FormatTab>Format</FormatTab>
        <Slot $w={33}><FindBinoc /></Slot>
        <Slot $w={25}><FindBinoc folder /></Slot>
        <Slot $w={24}>
          <Ico w={10} h={6}><path d="M1 5l4-4 4 4" stroke="#333" strokeWidth="1.5" /></Ico>
        </Slot>
      </TabStrip>

      <Ribbon>
        <Group $w={46}>
          <GroupBody>
            <Cells $cols="32px 13px" $rows="29px 29px 29px">
              <Hand /><span />
              <TextSelect /><span />
              <GearWrench /><Chev />
            </Cells>
          </GroupBody>
          <GroupLabel>Tools</GroupLabel>
        </Group>

        <Group $w={59}>
          <GroupBody>
            <GoCard>
              <GoFace><PageBtn s={22} kind="first" c="#8f8f8f" /></GoFace>
              <BigText $top={5}>
                <BigLine>Go</BigLine>
                <BigLine>To <Chev /></BigLine>
              </BigText>
            </GoCard>
          </GroupBody>
          <GroupLabel />
        </Group>

        <Group $w={258}>
          <GroupBody>
            <Big $w={56}>
              <ActualSize />
              <BigText $top={8}>
                <BigLine>Actual</BigLine>
                <BigLine>Size</BigLine>
              </BigText>
            </Big>
            <Cells $cols="26px" $rows="29px 29px 29px">
              <FitDoc kind="all" />
              <FitDoc kind="width" />
              <Toggled $w={27} $h={27}><FitDoc kind="all" edge={ORANGE} /></Toggled>
            </Cells>
            <Cells $cols="87px" $rows="29px 29px 29px">
              <Combo $w={84} $h={22}>103.06%<Chev /></Combo>
              <ZoomRow><PlusCircle />Zoom In</ZoomRow>
              <ZoomRow><PlusCircle minus />Zoom Out</ZoomRow>
            </Cells>
            <Slot $w={2} />
            <ShortLine />
            <Big $w={56} $pad={5}>
              <BigMagnifier />
              <BigText $top={3}>
                <BigLine>Zoom</BigLine>
                <BigLine>In/Out</BigLine>
              </BigText>
            </Big>
            <Cells $cols="24px" $rows="29px 29px 29px">
              <SmallMagnifier>
                <path d="M10 3l-4 4h8zM10 17l-4-4h8z" fill={BLUE} />
                <rect x="6" y="8.5" width="8" height="3" fill="#a9d3f6" />
              </SmallMagnifier>
              <SmallMagnifier>
                <path d="M5 8V5h3M12 5h3v3M15 12v3h-3M8 15H5v-3" stroke={BLUE} strokeWidth="1.3" />
              </SmallMagnifier>
              <FindDoc />
            </Cells>
          </GroupBody>
          <GroupLabel>Zoom</GroupLabel>
        </Group>

        <Group $w={344}>
          <GroupBody>
            <Big $w={59} $pad={9}>
              <Rotate />
              <BigText $top={3}>
                <BigLine>Rotate</BigLine>
                <BigLine>View <Chev /></BigLine>
              </BigText>
            </Big>
            <Cells $cols="28px 28px 28px 28px 13px" $rows="48px 27px">
              <SinglePage />
              <Toggled $w={28} $h={28}><SplitDoc /></Toggled>
              <FaintPair />
              <FaintGrid />
              <span />
              <ScrollDoc />
              <CoverDoc />
              <NumDocs />
              <MiniDocs />
              <Chev />
            </Cells>
            <ShortLine />
            <Cells $cols="30px 28px 28px 13px" $rows="29px 29px 29px">
              <Ruler />
              <MeasureLine />
              <Magnet />
              <Chev />
              <Snap />
              <Checker />
              <Swatch />
              <span />
              <CrossCursor />
              <XY />
              <PageHeight />
              <span />
            </Cells>
            <ShortLine />
            <Big $w={54} $pad={8}>
              <SplitWin />
              <BigText $top={10}>
                <BigLine>Split</BigLine>
                <BigLine><Chev /></BigLine>
              </BigText>
            </Big>
          </GroupBody>
          <GroupLabel>Page Display</GroupLabel>
        </Group>

        <Group $w={52}>
          <GroupBody>
            <Cells $cols="36px 8px" $rows="29px 29px 29px">
              <Cascade /><Chev />
              <Tiled /><Chev />
              <Toolbox /><Chev c="#b5b5b5" />
            </Cells>
          </GroupBody>
          <GroupLabel>Window</GroupLabel>
        </Group>
      </Ribbon>

      <DocTabs>
        <DocTab>
          New Document *
          <DocTabClose><Cross s={7} sw={1.4} /></DocTabClose>
        </DocTab>
        <AddTab>
          <Ico w={16} h={16}><path d="M8 0v16M0 8h16" stroke="#333" /></Ico>
        </AddTab>
        <CloseDoc><Cross s={14} sw={1.2} /></CloseDoc>
      </DocTabs>

      <Main>
        <Rail>
          <RailTop><Collapse /></RailTop>
          <Dots />
          {RAIL_TOP.map((icon, i) => <RailItem key={i}>{icon}</RailItem>)}
          <RailItem $active><FormDoc /></RailItem>
          {RAIL_MID.map((icon, i) => <RailItem key={i}>{icon}</RailItem>)}
          <RailRule />
          <RailItem><TagIcon /></RailItem>
          <RailItem><ZIcon /></RailItem>
          <DblChev />
        </Rail>

        <Panel>
          <PanelHead>
            Fields
            <Cross s={7} sw={1.4} />
          </PanelHead>
          <PanelBar>
            <GripMark />
            <Slot $w={29}><OptionsGears /></Slot>
            <BarText $w={52}>Options...</BarText>
            <Slot $w={15}><Chev /></Slot>
            <BarLine />
            <Slot $w={31}><CollapseIcon /></Slot>
            <BarText $w={66}>Collapse All</BarText>
            <BarLine />
            <Slot $w={31}><RenameIcon /></Slot>
            <BarLine />
            <Slot $w={34}><ListGear /></Slot>
            <BarEnd><UpEnd /></BarEnd>
          </PanelBar>
          <Tree>
            <TreeRow>
              <Chev />
              <RootBox />
              Day
            </TreeRow>
            {FIELDS.map(name => (
              <TreeRow key={name} $child>
                <TextField />
                {name}
              </TreeRow>
            ))}
          </Tree>
          <Watermark><FormDoc faint /></Watermark>
        </Panel>

        <Splitter>
          <SplitGrip>
            <Ico w={6} h={10}><path d="M5 1L1 5l4 4" stroke="#222" strokeWidth="1.6" /></Ico>
          </SplitGrip>
        </Splitter>

        <Viewer>
          <ViewRow>
            <Sheet>
              <SheetInner>
                {FIELDS.map(name => (
                  <FieldBox key={name}><FieldName>Day.{name}</FieldName></FieldBox>
                ))}
              </SheetInner>
            </Sheet>
            <VScroll>
              <Arrow dir="up" />
              <VThumb />
              <Arrow dir="down" />
            </VScroll>
          </ViewRow>
          <HScroll>
            <Arrow dir="left" />
            <HThumb />
            <Arrow dir="right" />
          </HScroll>
          <Status>
            <GripMark />
            <Slot $w={36}><DblChev /></Slot>
            <GripMark />
            <Slot $w={28}><PageBtn kind="first" /></Slot>
            <Slot $w={28}><PageBtn kind="prev" /></Slot>
            <PageInput>1 / 1</PageInput>
            <Slot $w={32}><PageBtn kind="next" /></Slot>
            <Slot $w={24}><PageBtn kind="last" /></Slot>
            <Slot $w={3} />
            <StatusLine />
            <Slot $w={16}><DblChev /></Slot>
            <GripMark />
            <Slot $w={28}><SinglePage /></Slot>
            <Toggled $w={28} $h={28}><SplitDoc /></Toggled>
            <Slot $w={12}><DblChev /></Slot>
            <Slot $w={3} />
            <GripMark />
            <Slot $w={1} />
            <Combo $w={81} $h={23}>103.06%<Chev /></Combo>
            <Slot $w={2} />
            <StatusLine />
            <Slot $w={32}><PlusCircle minus /></Slot>
            <Slot $w={10}><DblChev /></Slot>
            <Slot $w={2} />
            <GripMark />
            <Slot $w={12} />
            <Slot $w={13}><DblChev /></Slot>
            <StatusEnd><UpEnd /></StatusEnd>
          </Status>
        </Viewer>
      </Main>
    </Win>
  );
}
